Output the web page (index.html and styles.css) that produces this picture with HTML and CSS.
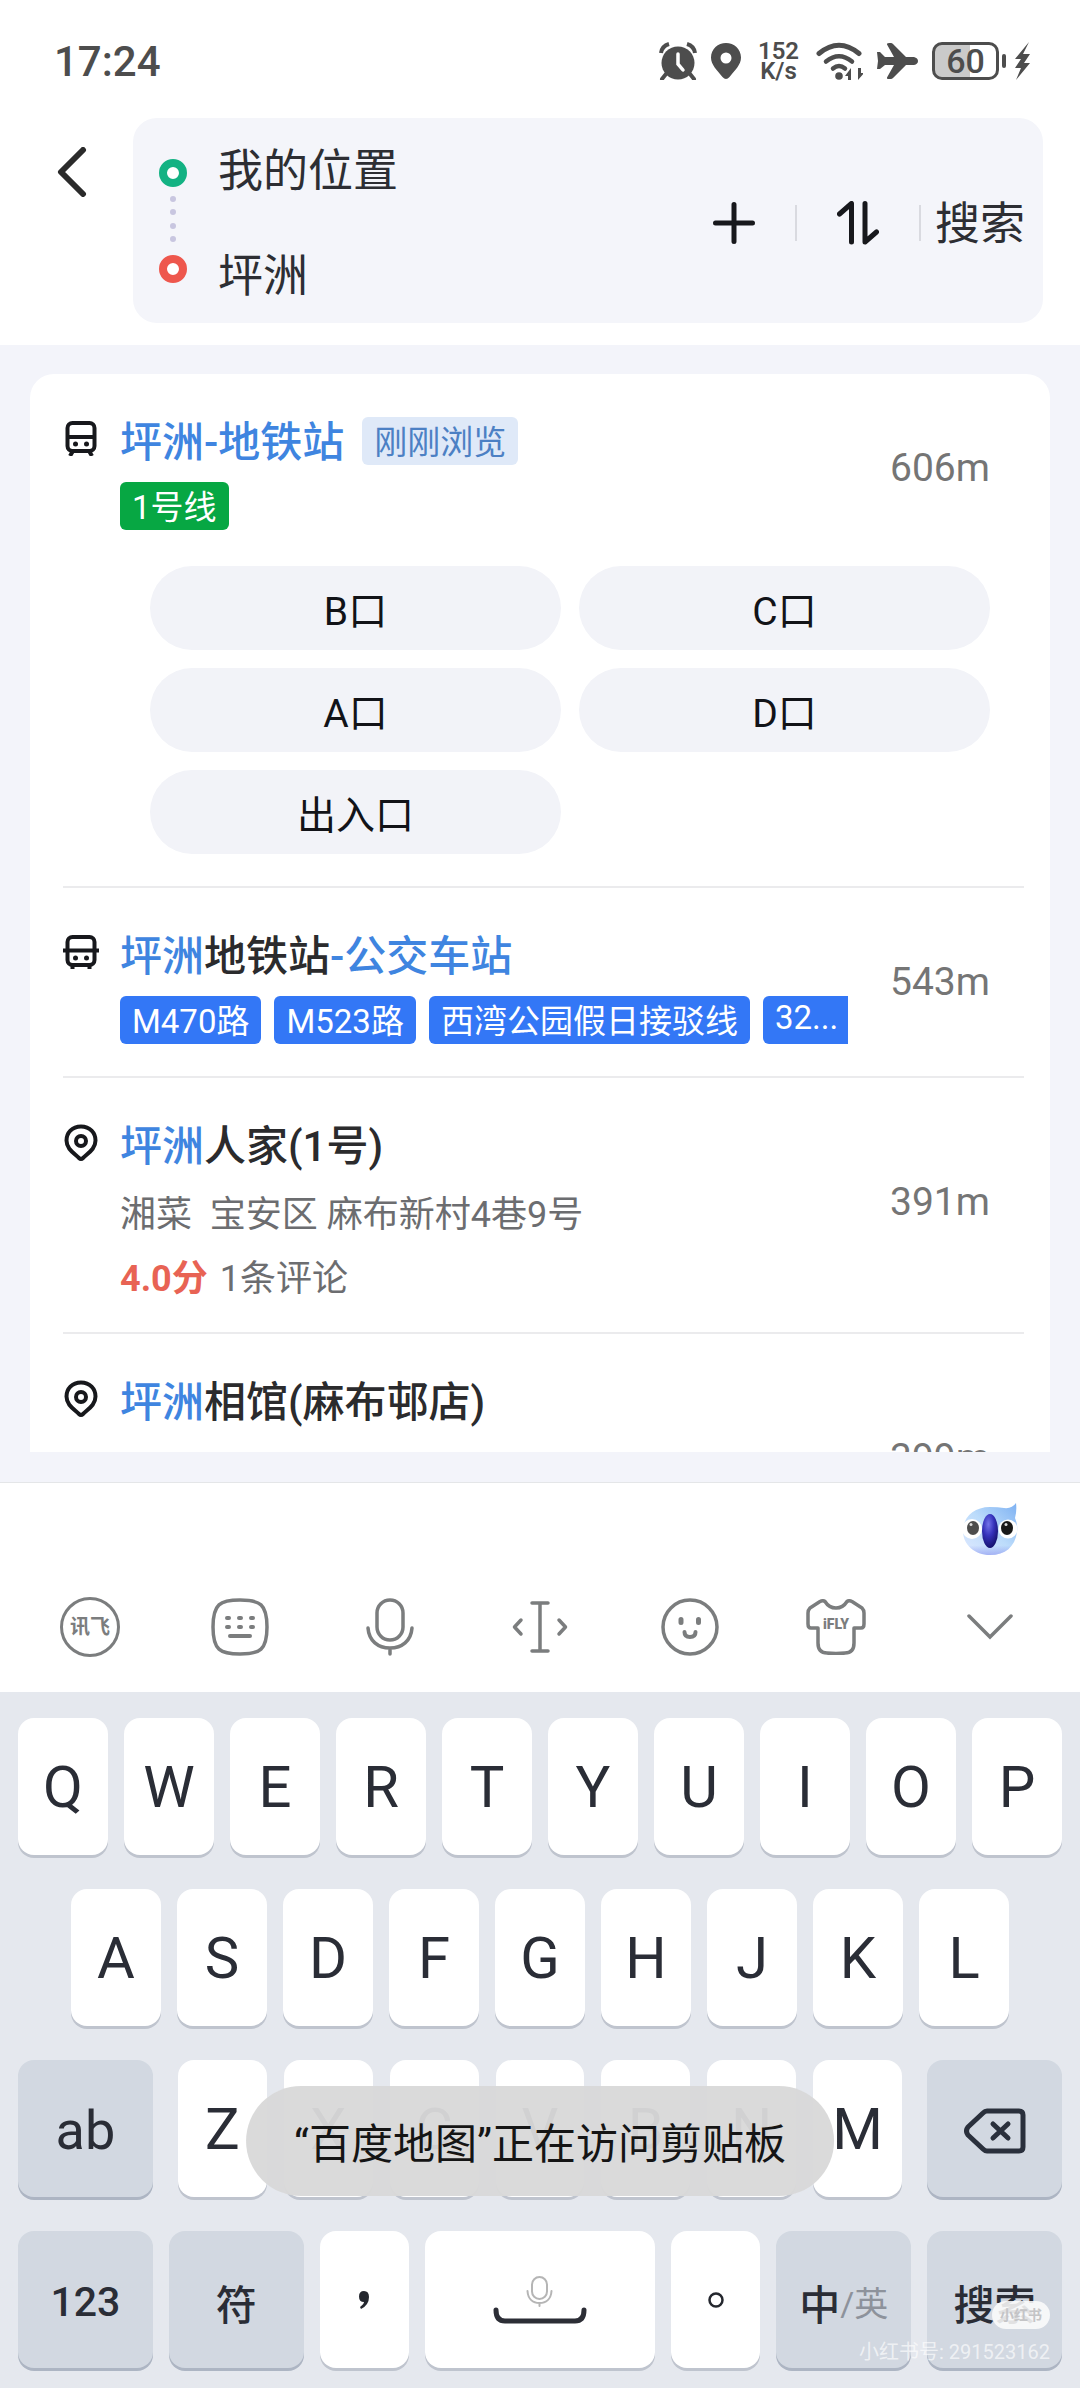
FILE: index.html
```html
<!DOCTYPE html>
<html lang="zh-CN">
<head>
<meta charset="utf-8">
<meta name="viewport" content="width=device-width, initial-scale=1">
<title>路线搜索</title>
<link rel="stylesheet" href="styles.css">
</head>
<body>
<header class="top">
  <div class="status">
    <time class="clock">17:24</time>
    <div class="status-icons">
      <svg width="38" height="38" viewBox="0 0 38 38" fill="#4d4d4d"><circle cx="19" cy="21" r="16.500"/><path d="M7 32l-4 5M31 32l4 5" stroke="#4d4d4d" stroke-width="4" stroke-linecap="round"/><path d="M2 11q1-7 8-9M36 11q-1-7-8-9" fill="none" stroke="#4d4d4d" stroke-width="4"/><path d="M19 12v10l5 6" fill="none" stroke="#fff" stroke-width="3.500" stroke-linecap="round"/></svg>
      <svg width="30" height="36" viewBox="0 0 30 36"><path fill="#4d4d4d" fill-rule="evenodd" d="M15 0C7 0 0 6 0 14.500C0 22 6 27 11.500 34q3.500 4 7 0C24 27 30 22 30 14.500C30 6 23 0 15 0zM15 9.500a5.500 5.500 0 1 1 0 11a5.500 5.500 0 1 1 0-11z"/></svg>
      <div class="speed"><span>152</span><span>K/s</span></div>
      <svg width="47" height="38" viewBox="0 0 47 38" fill="none" stroke="#4d4d4d" stroke-width="5" stroke-linecap="round"><path d="M3 11.500Q23 -5 43 11.500"/><path d="M10 19.500Q23 9 36 19.500" stroke-width="4.500"/><path d="M17 26.500q6-5 12 0" stroke-width="4.500"/><circle cx="23" cy="34" r="3.800" fill="#4d4d4d" stroke="none"/><path d="M29 34l6-8v12h-3v-4zM48 31l-6 7V26h3v5z" fill="#4d4d4d" stroke="none"/></svg>
      <svg width="41" height="36" viewBox="0 0 41 36"><path fill="#4d4d4d" d="M0 9h3l5 5h9L10 1.500Q9.500 0 12 0h2q1 0 2 1L29 14h8q4 1 4 4t-4 4h-8L16 35q-1 1-2 1h-2q-2.500 0-2-1.500L17 22H8l-5 4H0l1-8z"/></svg>
      <div class="battery"><span class="battery-level">60</span><i class="battery-tip"></i></div>
      <svg class="bolt" width="16" height="38" viewBox="0 0 16 38"><path fill="#4d4d4d" d="M15 0L1 17h6L1 26h6L2 38L16 21h-6L16 12H9z"/></svg>
    </div>
  </div>
  <form class="route" onsubmit="return false">
    <button type="button" class="back" aria-label="返回"><svg width="30" height="50" viewBox="0 0 30 50"><path d="M26 3L4 25L26 47" fill="none" stroke="#2b2b2b" stroke-width="6" stroke-linecap="round" stroke-linejoin="round"/></svg></button>
    <div class="route-box">
      <svg class="markers" width="28" height="124" viewBox="0 0 28 124"><circle cx="14" cy="14" r="10" fill="#fff" stroke="#13b283" stroke-width="8"/><g fill="#c8c6e0"><circle cx="14" cy="40" r="3"/><circle cx="14" cy="53" r="3"/><circle cx="14" cy="67" r="3"/><circle cx="14" cy="80" r="3"/></g><circle cx="14" cy="110" r="10" fill="#fff" stroke="#ee574d" stroke-width="8"/></svg>
      <div class="fields">
        <input type="text" aria-label="起点" value="我的位置">
        <input type="text" aria-label="终点" value="坪洲">
      </div>
      <div class="actions">
        <button type="button" class="icon-btn" aria-label="添加途经点"><svg width="42" height="42" viewBox="0 0 42 42"><path d="M21 2.500v37M2.500 21h37" stroke="#17181c" stroke-width="5" stroke-linecap="round"/></svg></button>
        <span class="bar"></span>
        <button type="button" class="icon-btn" aria-label="交换起终点"><svg width="42" height="44" viewBox="0 0 42 44" fill="none" stroke="#17181c" stroke-width="5" stroke-linecap="round" stroke-linejoin="round"><path d="M2.500 13L14.500 2.500V41"/><path d="M28 2.500V41L39.500 31"/></svg></button>
        <span class="bar"></span>
        <button type="submit" class="search-btn">搜索</button>
      </div>
    </div>
  </form>
</header>

<main class="results">
  <ul class="card">
    <li class="item">
      <div class="row">
        <svg class="kind" width="36" height="36" viewBox="0 0 36 36" fill="none" stroke="#17181c" stroke-width="4"><rect x="4.500" y="3" width="27" height="28" rx="5"/><path d="M4 17h28M10 31l-3 5M26 31l3 5"/><circle cx="12.500" cy="24" r="2.500" fill="#17181c" stroke="none"/><circle cx="23.500" cy="24" r="2.500" fill="#17181c" stroke="none"/></svg>
        <div class="info">
          <div class="title-row"><h2 class="title"><em>坪洲-地铁站</em></h2><span class="tag recent">刚刚浏览</span></div>
          <div class="tags"><span class="tag line">1号线</span></div>
        </div>
        <span class="distance">606m</span>
      </div>
      <div class="exits">
        <button type="button">B口</button>
        <button type="button">C口</button>
        <button type="button">A口</button>
        <button type="button">D口</button>
        <button type="button">出入口</button>
      </div>
    </li>
    <li class="item">
      <div class="row">
        <svg class="kind" width="36" height="36" viewBox="0 0 36 36" fill="none" stroke="#17181c" stroke-width="4"><rect x="4.500" y="3" width="27" height="28" rx="5"/><path d="M0 16.500h36M9.500 31v4M26.500 31v4"/><circle cx="12.500" cy="24" r="2.500" fill="#17181c" stroke="none"/><circle cx="23.500" cy="24" r="2.500" fill="#17181c" stroke="none"/></svg>
        <div class="info">
          <h2 class="title"><em>坪洲</em>地铁站<em>-公交车站</em></h2>
          <div class="tags"><span class="tag">M470路</span><span class="tag">M523路</span><span class="tag">西湾公园假日接驳线</span><span class="tag cut">32...</span></div>
        </div>
        <span class="distance">543m</span>
      </div>
    </li>
    <li class="item">
      <div class="row place">
        <svg class="kind" width="36" height="38" viewBox="0 0 36 38" fill="none" stroke="#17181c" stroke-width="4"><path d="M18 2.500C9 2.500 3.500 9 3.500 16.500C3.500 25 11 29 16 34q2 2 4 0C25 29 32.500 25 32.500 16.500C32.500 9 27 2.500 18 2.500z"/><circle cx="18" cy="17" r="5"/></svg>
        <div class="info">
          <h2 class="title"><em>坪洲</em>人家(1号)</h2>
          <p class="address">湘菜&nbsp; 宝安区 麻布新村4巷9号</p>
          <p class="review"><b>4.0分</b>1条评论</p>
        </div>
        <span class="distance">391m</span>
      </div>
    </li>
    <li class="item">
      <div class="row place">
        <svg class="kind" width="36" height="38" viewBox="0 0 36 38" fill="none" stroke="#17181c" stroke-width="4"><path d="M18 2.500C9 2.500 3.500 9 3.500 16.500C3.500 25 11 29 16 34q2 2 4 0C25 29 32.500 25 32.500 16.500C32.500 9 27 2.500 18 2.500z"/><circle cx="18" cy="17" r="5"/></svg>
        <div class="info">
          <h2 class="title"><em>坪洲</em>相馆(麻布邨店)</h2>
        </div>
        <span class="distance">399m</span>
      </div>
    </li>
  </ul>
</main>

<section class="keyboard" aria-label="键盘">
  <div class="suggest">
    <button type="button" aria-label="助手"><svg width="56" height="54" viewBox="0 0 56 54"><defs><linearGradient id="head" x1="0" y1="1" x2="1" y2="0"><stop offset="0" stop-color="#dfe9ff"/><stop offset=".5" stop-color="#bcdcfb"/><stop offset="1" stop-color="#7cb0f2"/></linearGradient><linearGradient id="chin" x1="0" y1="0" x2="0" y2="1"><stop offset=".6" stop-color="#8f9ff0" stop-opacity="0"/><stop offset="1" stop-color="#9aa6f2" stop-opacity=".8"/></linearGradient><radialGradient id="beak" cx=".4" cy=".3" r=".7"><stop offset="0" stop-color="#7374ea"/><stop offset=".5" stop-color="#3532bb"/><stop offset="1" stop-color="#161370"/></radialGradient></defs><path fill="url(#head)" d="M54 1q1 8-1 15q3 7 2 14C53 45 43 53 28 53S1 43 1 29S12 5 28 5q8 0 14 1q8 1 12-5z"/><path fill="url(#chin)" d="M55 30C53 45 43 53 28 53S1 43 1 29z"/><circle cx="10" cy="27" r="10" fill="#fff"/><circle cx="46" cy="27" r="9.500" fill="#fff"/><ellipse cx="11" cy="26" rx="6" ry="7" fill="#4d4d4d"/><ellipse cx="45" cy="26" rx="6" ry="7" fill="#191919"/><circle cx="9" cy="22.500" r="1.500" fill="#ddd"/><circle cx="44" cy="22.500" r="1.500" fill="#ddd"/><ellipse cx="28" cy="29" rx="8" ry="17" fill="url(#beak)"/></svg></button>
  </div>
  <div class="tools">
    <button type="button" aria-label="讯飞"><svg width="60" height="60" viewBox="0 0 60 60"><circle cx="30" cy="30" r="28.500" fill="none" stroke="#7b7d7e" stroke-width="3"/><text x="30" y="37" text-anchor="middle" class="logo-text">讯飞</text></svg></button>
    <button type="button" aria-label="键盘布局"><svg width="58" height="58" viewBox="0 0 58 58" fill="none" stroke="#7b7d7e" stroke-width="3.500" stroke-linecap="round"><path d="M29 2C49 2 56 6 56 29S49 56 29 56S2 52 2 29S9 2 29 2z"/><path d="M16 20h2M28 20h2M40 20h2M16 29h2M28 29h2M40 29h2M19 38h20" stroke-width="4"/></svg></button>
    <button type="button" aria-label="语音"><svg width="48" height="58" viewBox="0 0 48 58" fill="none" stroke="#7b7d7e" stroke-width="3.500" stroke-linecap="round"><rect x="11" y="2" width="26" height="40" rx="13"/><path d="M2 30C3 43 12 50 24 50S45 43 46 30M24 50v6"/></svg></button>
    <button type="button" aria-label="移动光标"><svg width="56" height="54" viewBox="0 0 56 54" fill="none" stroke="#7b7d7e" stroke-width="3.500" stroke-linecap="round" stroke-linejoin="round"><path d="M28 3v48M20 3h16M20 51h16M9 20L2.500 27L9 34M47 20L53.500 27L47 34"/></svg></button>
    <button type="button" aria-label="表情"><svg width="60" height="60" viewBox="0 0 60 60" fill="none" stroke="#7b7d7e" stroke-width="3.500" stroke-linecap="round"><circle cx="30" cy="30" r="27"/><path d="M24.500 35q0 5 5.500 5t5.500-5" stroke-width="4"/><path d="M21 22.500v3M38.500 22.500v3" stroke-width="5"/></svg></button>
    <button type="button" class="skin" aria-label="皮肤"><svg width="60" height="56" viewBox="0 0 60 56"><path fill="none" stroke="#7b7d7e" stroke-width="3.500" stroke-linejoin="round" d="M19 2.500Q23 9 30 9T41 2.500q2-1.500 5 0L56 9q2 2 2 5v11q0 4-3 4h-7v15q0 10-9 10Q30 55 21 54q-9 0-9-10V29H5q-3 0-3-4V14q0-3 2-5L14 2.500q3-1.500 5 0z"/><text x="30" y="30" text-anchor="middle" class="shirt-text">iFLY</text></svg></button>
    <button type="button" aria-label="收起"><svg width="46" height="26" viewBox="0 0 46 26" fill="none" stroke="#7b7d7e" stroke-width="3.500" stroke-linecap="round"><path d="M2 2L23 23L44 2"/></svg></button>
  </div>
  <div class="keys">
    <div class="key-row">
      <button>Q</button><button>W</button><button>E</button><button>R</button><button>T</button><button>Y</button><button>U</button><button>I</button><button>O</button><button>P</button>
    </div>
    <div class="key-row middle">
      <button>A</button><button>S</button><button>D</button><button>F</button><button>G</button><button>H</button><button>J</button><button>K</button><button>L</button>
    </div>
    <div class="key-row wide-gap">
      <button class="fn shift">ab</button>
      <div class="letters"><button>Z</button><button>X</button><button>C</button><button>V</button><button>B</button><button>N</button><button>M</button></div>
      <button class="fn" aria-label="删除"><svg width="62" height="46" viewBox="0 0 62 46" fill="none" stroke="#2a303c" stroke-width="5" stroke-linecap="round" stroke-linejoin="round"><path d="M23 3h32q4 0 4 4v32q0 4-4 4H23q-2 0-4-2L4 27q-3-4 0-8L19 5q2-2 4-2z"/><path d="M29 16l15 14M44 16L29 30"/></svg></button>
      <div class="toast" role="status">“百度地图”正在访问剪贴板</div>
    </div>
    <div class="key-row">
      <button class="fn">123</button><button class="fn">符</button>
      <button class="comma" aria-label="逗号"><svg width="12" height="18" viewBox="0 0 12 18"><path fill="#24272e" d="M6 0q5 0 5 6q0 8-8 12l-1-2q4-3 4-5Q1 11 1 5.500Q1 0 6 0z"/></svg></button>
      <button class="space" aria-label="空格"><svg width="94" height="50" viewBox="0 0 94 50" fill="none" stroke-linecap="round"><g stroke="#b5b5b5" stroke-width="2"><rect x="39" y="2" width="15" height="22" rx="7.500"/><path d="M34.500 16C35 24 40 28 46.500 28S58 24 58.500 16M46.500 28v3"/></g><path d="M3 35q0 11 9 11h70q9 0 9-11" stroke="#2c2e36" stroke-width="5"/></svg></button>
      <button class="stop" aria-label="句号"><svg width="16" height="16" viewBox="0 0 16 16"><circle cx="8" cy="8" r="6.500" fill="none" stroke="#24272e" stroke-width="2.500"/></svg></button>
      <button class="fn">中<small>/英</small></button><button class="fn">搜索</button>
    </div>
  </div>
  <div class="watermark"><span class="badge">小红书</span><span>小红书号: 291523162</span></div>
</section>
</body>
</html>
```
FILE: styles.css
```css
* { box-sizing: border-box; }

body {
  margin: 0;
  height: 100vh;
  display: flex;
  flex-direction: column;
  overflow: hidden;
  background: #f3f4fa;
  color: #2d2e33;
  font-family: Roboto, "Noto Sans CJK SC", sans-serif;
}

button {
  display: flex;
  align-items: center;
  justify-content: center;
  margin: 0;
  padding: 0;
  border: 0;
  background: none;
  color: inherit;
  font: inherit;
}

svg { display: block; flex: none; }

h2, p, ul { margin: 0; padding: 0; }

/* Header */
.top { flex: none; padding-bottom: 22px; background: #fff; }

.status {
  display: flex;
  align-items: center;
  justify-content: space-between;
  height: 118px;
  padding: 4px 50px 0 54px;
  color: #4d4d4d;
}

.clock { font-size: 42px; font-weight: 500; }

.status-icons { display: flex; align-items: center; gap: 14px; }

.speed {
  display: flex;
  flex-direction: column;
  align-items: center;
  width: 47px;
  font-size: 24px;
  line-height: 20px;
  font-weight: 600;
}

.battery { display: flex; align-items: center; gap: 3px; }

.battery-level {
  display: flex;
  align-items: center;
  justify-content: center;
  width: 67px;
  height: 38px;
  border: 3px solid #4d4d4d;
  border-radius: 10px;
  background: linear-gradient(90deg, #cacaca 58%, #fff 58%);
  font-size: 34px;
  line-height: 32px;
  font-weight: 500;
}

.battery-tip { width: 4px; height: 14px; border-radius: 2px; background: #4d4d4d; }

.bolt { margin-left: -6px; }

.route { display: flex; }

.back { flex: 0 0 133px; height: 108px; }
.back svg { margin-left: 10px; }

.route-box {
  flex: 1;
  display: flex;
  align-items: center;
  min-width: 0;
  margin-right: 37px;
  padding: 27px 0 19px 26px;
  border-radius: 24px;
  background: #f4f5fa;
}

.markers { align-self: flex-start; margin: 14px 31px 0 0; }

.fields { flex: 1; display: flex; flex-direction: column; gap: 51px; min-width: 0; }

.fields input {
  width: 100%;
  height: 54px;
  padding: 0;
  border: 0;
  outline: 0;
  background: none;
  color: #2d2e33;
  font: 45px/54px Roboto, "Noto Sans CJK SC", sans-serif;
}

.actions { display: flex; align-items: center; padding-bottom: 4px; font-size: 45px; }
.icon-btn { padding: 0 40px; }
.bar { width: 2px; height: 36px; background: #d9dae0; }
.search-btn { padding: 4px 18px 0 14px; line-height: 54px; }

/* Result list */
.results { flex: 1; min-height: 0; padding: 29px 30px 30px; overflow: hidden; }

.card {
  height: 100%;
  padding: 0 26px 0 33px;
  overflow: hidden;
  border-radius: 24px 24px 0 0;
  background: #fff;
  list-style: none;
}

.item { padding: 38px 34px 32px 0; border-bottom: 2px solid #ebebed; }

.row { display: flex; align-items: flex-start; }

.kind { margin: 8px 21px 0 0; }

.info { flex: 1; min-width: 0; }

.title-row { display: flex; align-items: center; gap: 18px; }

.title {
  padding-top: 4px;
  color: #2b2b2d;
  font-size: 42px;
  line-height: 54px;
  font-weight: 500;
  white-space: nowrap;
}
.title em { color: #3f85e0; font-style: normal; }

.tags { display: flex; gap: 13px; margin-top: 12px; }

.tag {
  flex: none;
  padding: 4px 12px 0;
  border-radius: 6px;
  background: #3377f6;
  color: #fff;
  font-size: 33px;
  line-height: 44px;
  white-space: nowrap;
}

.tag.recent { background: #dfe9f8; color: #4c80c4; }
.tag.line { background: #07a743; }
.tag.cut { flex: 1; padding: 0 0 4px 12px; border-radius: 6px 0 0 6px; }

.distance {
  flex: 0 0 142px;
  align-self: center;
  padding-bottom: 6px;
  color: #757575;
  font-size: 39px;
  line-height: 48px;
  text-align: right;
}

.place { min-height: 184px; }
.place .distance { padding-bottom: 12px; }

.address, .review { color: #6c6d70; font-size: 36px; line-height: 42px; }
.address { margin-top: 20px; }
.review { margin-top: 22px; }
.review b { margin-right: 12px; color: #e86354; }

.exits {
  display: grid;
  grid-template-columns: 1fr 1fr;
  gap: 18px;
  margin: 36px 0 0 87px;
}

.exits button {
  height: 84px;
  border-radius: 42px;
  background: #f2f3f8;
  color: #121318;
  font-size: 39px;
}

/* Keyboard */
.keyboard { position: relative; flex: none; border-top: 1px solid #e4e6e8; background: #fff; }

.suggest { display: flex; justify-content: flex-end; padding: 19px 62px 6px; }

.tools {
  display: grid;
  grid-template-columns: repeat(7, 1fr);
  height: 130px;
  padding: 0 15px;
}

.skin { padding-right: 9px; }

.logo-text { fill: #7b7d7e; font-size: 20px; font-weight: 700; }
.shirt-text { fill: #7b7d7e; font-size: 14px; font-weight: 900; }

.keys {
  display: flex;
  flex-direction: column;
  gap: 34px;
  padding: 26px 18px 20px;
  background: #e5e8ee;
  color: #2a2d36;
}

.key-row { position: relative; display: flex; gap: 16px; height: 137px; }
.middle { padding: 0 53px; }
.wide-gap { gap: 25px; }
.letters { display: flex; gap: 17px; flex: 725 1 0; }

.keys button {
  flex: 89 1 0;
  min-width: 0;
  border-radius: 16px;
  background: #fff;
  box-shadow: 0 3px 0 #bfc4ce;
  font-size: 58px;
}

.keys .fn {
  flex-grow: 135;
  padding-top: 4px;
  background: #d2d8e1;
  box-shadow: 0 3px 0 #adb5c3;
  font-size: 41px;
  font-weight: 500;
}

.keys .shift { font-size: 54px; font-weight: 400; }
.keys .space { flex-grow: 231; }
.keys small { color: #8d929b; font-size: 34px; font-weight: 400; }

.toast {
  position: absolute;
  top: 26px;
  left: 50%;
  transform: translateX(-50%);
  padding: 8px 48px 0;
  border-radius: 55px;
  background: rgba(217, 217, 217, .96);
  color: #151515;
  font-size: 42px;
  line-height: 102px;
  white-space: nowrap;
}

.watermark {
  position: absolute;
  right: 30px;
  bottom: 22px;
  display: flex;
  flex-direction: column;
  align-items: flex-end;
  gap: 9px;
  color: rgba(255, 255, 255, .65);
  font-size: 20px;
  line-height: 28px;
}

.badge {
  padding: 0 8px;
  border-radius: 14px;
  background: rgba(250, 250, 250, .88);
  color: #c4c4c6;
  font-size: 14px;
  font-weight: 700;
}
```
